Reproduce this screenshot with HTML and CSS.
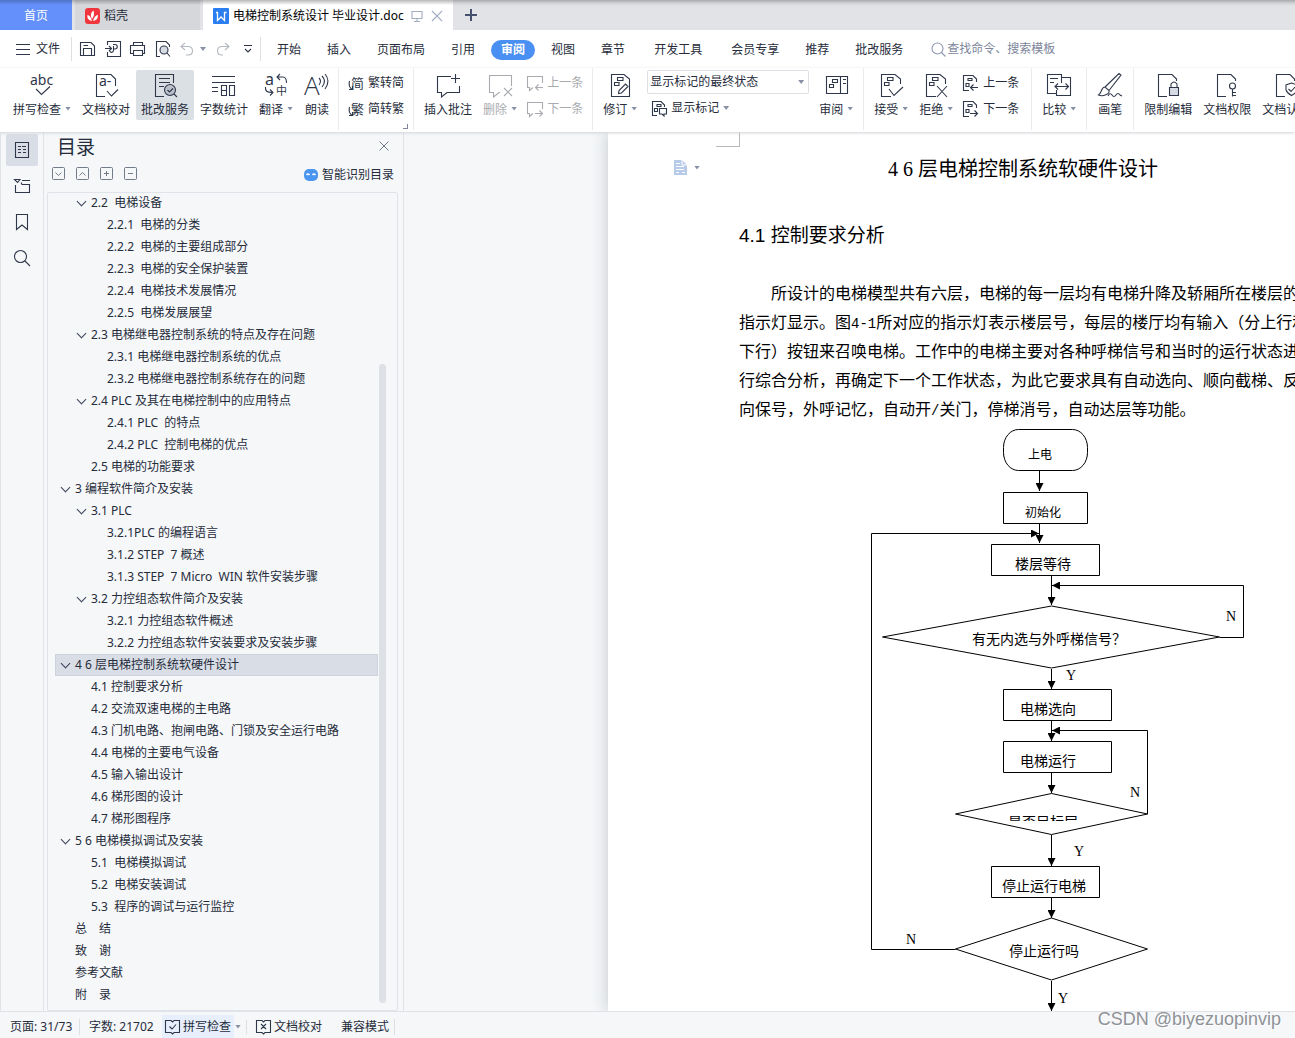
FILE: index.html
```html
<!DOCTYPE html>
<html lang="zh-CN">
<head>
<meta charset="utf-8">
<title>电梯控制系统设计 毕业设计.doc</title>
<link rel="stylesheet" href="styles.css">
</head>
<body>
<svg class="defs" aria-hidden="true">
  <symbol id="page-marks" viewBox="0 0 26 26"><path d="M13 24.500H3.500V2.500H17L22.500 7V12"/><path d="M9.500 5.500H15V8.500H9.500ZM6.500 10.500H11V13.500H6.500Z" /></symbol>
  <symbol id="page-blank" viewBox="0 0 26 26"><path d="M12 24.500H3.500V2.500H17L21.500 7V9"/></symbol>
  <symbol id="bubble" viewBox="0 0 26 26"><path d="M16 4.500H2.500V20.500H6.500V25L12 20.500H24.500V14"/></symbol>
</svg>

<header class="tabs">
  <button class="tab home">首页</button>
  <button class="tab docer"><svg width="15" height="16" viewBox="0 0 15 16"><rect width="15" height="16" rx="3" fill="#f0353d"/><path d="M7 13C2.500 12 2 9 2.500 7 4.500 7.500 6 9 7 13ZM7 11C5 7 6 4.500 8.500 2.500 9.500 6 9 8.500 7 11ZM8 13C9 9 10.500 7.500 13 7 13 10.500 11.500 12.500 8 13Z" fill="#fff"/></svg>稻壳</button>
  <button class="tab current"><svg width="16" height="16" viewBox="0 0 16 16"><rect width="16" height="16" rx="1" fill="#2b7ef0"/><path d="M3 4.500H4.500V12.500L8 9 11.500 12.500V4.500H13.500" fill="none" stroke="#fff" stroke-width="1.300"/></svg><span>电梯控制系统设计 毕业设计.doc</span>
    <svg class="ico pale screen" width="12" height="12" viewBox="0 0 12 12"><path d="M1 1.500H11V8.500H1ZM6 8.500V11M3 11.500H9"/></svg>
    <svg class="ico pale close" width="12" height="12" viewBox="0 0 12 12"><path d="M1 1L11 11M11 1L1 11"/></svg></button>
  <button class="add" aria-label="新建"><svg width="12" height="12" viewBox="0 0 12 12"><path d="M6 0V12M0 6H12" stroke="#47506b" stroke-width="2"/></svg></button>
</header>

<nav class="menu">
  <button class="file"><svg class="ico" width="14" height="11" viewBox="0 0 14 11"><path d="M0 .5H14M0 5.500H14M0 10.500H14"/></svg>文件</button>
  <div class="quick">
    <button aria-label="保存"><svg class="ico" width="16" height="16" viewBox="0 0 16 16"><path d="M.5 1.500H11L14.500 5V14.500H.5ZM3.500 14.500V7.500H11.500V14.500M3.500 4.500H8"/></svg></button>
    <button aria-label="输出为PDF"><svg class="ico" width="16" height="16" viewBox="0 0 16 16"><path d="M2.500 4V.5H15.500V15.500H2.500V11M0 7.500H6M4 5L6.500 7.500 4 10M8 3.500H10C13 3.500 13 8 10 8H8M8.500 5V9C8.500 12 5 12 5 10"/></svg></button>
    <button aria-label="打印"><svg class="ico" width="16" height="16" viewBox="0 0 16 16"><path d="M3.500 4.500V1.500H12.500V4.500M3.500 12.500H.5V4.500H14.500V12.500H12.500M3.500 9.500H12.500V14.500H3.500Z"/></svg></button>
    <button aria-label="打印预览"><svg class="ico" width="16" height="16" viewBox="0 0 16 16"><path d="M5 15.500H1.500V.5H11L14.500 4V6M12 12L15 15.500"/><circle cx="9" cy="9" r="4" fill="#d5dae3"/></svg></button>
    <button class="undo" aria-label="撤销"><svg class="ico gray" width="14" height="14" viewBox="0 0 14 14"><path d="M5 1L1 4.500 5 8M1 4.500H8C11 4.500 12.500 6 12.500 9 12.500 11 11 13 8 13H6"/></svg><i class="caret"></i></button>
    <button aria-label="恢复"><svg class="ico gray" width="14" height="14" viewBox="0 0 14 14"><path d="M9 1L13 4.500 9 8M13 4.500H6C3 4.500 1.500 6 1.500 9 1.500 11 3 13 6 13H7"/></svg></button>
    <button aria-label="更多"><svg class="ico" width="8" height="8" viewBox="0 0 8 8"><path d="M0 .5H8M1 4L4 7 7 4"/></svg></button>
  </div>
  <div class="pages">
    <button>开始</button><button>插入</button><button>页面布局</button><button>引用</button><button class="active">审阅</button><button>视图</button><button>章节</button><button class="wide">开发工具</button><button>会员专享</button><button>推荐</button><button>批改服务</button>
  </div>
  <label class="search"><svg class="ico" width="15" height="15" viewBox="0 0 15 15"><circle cx="6.500" cy="6.500" r="5.500"/><path d="M10.500 10.500L14.500 14.500"/></svg><input type="text" placeholder="查找命令、搜索模板" aria-label="查找命令"></label>
</nav>

<div class="ribbon">
  <div class="group first">
    <button class="big"><svg class="ico" viewBox="0 0 26 26"><text x="1" y="13" font-size="14">abc</text><path d="M7 17L12.500 22.500 21 14.500"/></svg><span>拼写检查<i class="caret"></i></span></button>
    <button class="big"><svg class="ico" viewBox="0 0 26 26"><path d="M12 24.500H3.500V2.500H18L22.500 7V14M14 19L18.500 24 25 17.500"/><text x="6" y="14" font-size="14">a-</text></svg><span>文档校对</span></button>
    <button class="big on"><svg class="ico" viewBox="0 0 26 26"><path d="M12 24.500H3.500V2.500H21.500V11M7 6.500H18M7 10.500H18M7 14.500H12"/><circle cx="18" cy="18" r="5.500" fill="#b9c0ca"/><path d="M15.500 18L17.500 20 21 16.500M22 22L25 25"/></svg><span>批改服务</span></button>
    <button class="big"><svg class="ico" viewBox="0 0 26 26"><path d="M1 4.500H24M1 10.500H24M1 15.500H7M1 19.500H7M10.500 13.500H15.500V23.500H10.500ZM10.500 18.500H15.500M18.500 13.500H23.500V23.500H18.500Z"/></svg><span>字数统计</span></button>
    <button class="big"><svg class="ico" viewBox="0 0 26 26"><text x="2" y="13" font-size="16">a</text><text x="13" y="23" font-size="11">中</text><path d="M17 2L14 5 17 8M14 5H20C23 5 23.500 7 23.500 11M2.500 15C2 19 4 20.500 9 20.500M7 17.500L10 20.500 7 23.500"/></svg><span>翻译<i class="caret"></i></span></button>
    <button class="big"><svg class="ico" viewBox="0 0 26 26"><text class="thin" x="0" y="23" font-size="26">A</text><path d="M15 6Q18 9 15 13M18 4Q23 9 18 15M21 2Q27 9 21 17"/></svg><span>朗读</span></button>
  </div>
  <div class="group">
    <div class="stack">
      <button class="small"><svg class="ico" width="16" height="17" viewBox="0 0 16 17"><text x="3" y="13" font-size="13">简</text><path d="M1.500 6Q0 11 4 14.500M1 14.500H4.500V11"/></svg>繁转简</button>
      <button class="small"><svg class="ico" width="16" height="17" viewBox="0 0 16 17"><text x="3" y="13" font-size="13">繁</text><path d="M1.500 6Q0 11 4 14.500M1 14.500H4.500V11"/></svg>简转繁</button>
    </div>
    <i class="corner"></i>
  </div>
  <div class="group">
    <button class="big"><svg class="ico" viewBox="0 0 26 26"><use href="#bubble"/><path d="M20.500 2V11M16 6.500H25"/></svg><span>插入批注</span></button>
    <button class="big off"><svg class="ico" viewBox="0 0 26 26"><path d="M13 20.500H12L6.500 25V20.500H2.500V3.500H24.500V14M17 16L25 24M25 16L17 24"/></svg><span>删除<i class="caret"></i></span></button>
    <div class="stack">
      <button class="small off"><svg class="ico" width="16" height="17" viewBox="0 0 16 17"><path d="M15.500 8V1.500H.5V12.500H2.500V15.500L6 12.500M16 12.500H9M11.500 9.500L8.500 12.500 11.500 15.500"/></svg>上一条</button>
      <button class="small off"><svg class="ico" width="16" height="17" viewBox="0 0 16 17"><path d="M15.500 8V1.500H.5V12.500H2.500V15.500L6 12.500M8 12.500H15M12.500 9.500L15.500 12.500 12.500 15.500"/></svg>下一条</button>
    </div>
  </div>
  <div class="group">
    <button class="big"><svg class="ico" viewBox="0 0 26 26"><path d="M4.500 2.500H17L22.500 7V24.500H4.500ZM10.500 5.500H16V8.500H10.500ZM7.500 10.500H12V13.500H7.500ZM11.500 21.500L12 18.500 18.500 12 21 14.500 14.500 21Z"/></svg><span>修订<i class="caret"></i></span></button>
    <div class="stack view">
      <div class="combo"><select aria-label="显示状态"><option>显示标记的最终状态</option></select><i class="caret"></i></div>
      <button class="small"><svg class="ico" width="16" height="17" viewBox="0 0 16 17"><path d="M6 15.500H1.500V1.500H10L13.500 5V7M6 4.500H10V6.500H6ZM3.500 8.500H6.500V11.500H3.500ZM8.500 8.500H15.500V14H13V16L11 14H8.500Z"/></svg>显示标记<i class="caret"></i></button>
    </div>
    <button class="big"><svg class="ico" viewBox="0 0 26 26"><path d="M3.500 4.500H24.500V21.500H3.500ZM17.500 4.500V21.500M9.500 7.500H14.500V10.500H9.500ZM6.500 12.500H10.500V15.500H6.500ZM20 7.500H23M20 11.500H23"/></svg><span>审阅<i class="caret"></i></span></button>
  </div>
  <div class="group review">
    <button class="big"><svg class="ico" viewBox="0 0 26 26"><use href="#page-marks"/><path d="M11 17L16 23.500 25 15"/></svg><span>接受<i class="caret"></i></span></button>
    <button class="big"><svg class="ico" viewBox="0 0 26 26"><use href="#page-marks"/><path d="M14 14L24 25M24 14L14 25"/></svg><span>拒绝<i class="caret"></i></span></button>
    <div class="stack">
      <button class="small"><svg class="ico" width="16" height="17" viewBox="0 0 16 17"><path d="M6 15.500H.5V.5H10L13.500 4V7M5 3.500H9V5.500H5ZM3 8.500H6V11.500H3ZM15 12.500H8M10.500 9.500L7.500 12.500 10.500 15.500"/></svg>上一条</button>
      <button class="small"><svg class="ico" width="16" height="17" viewBox="0 0 16 17"><path d="M6 15.500H.5V.5H10L13.500 4V7M5 3.500H9V5.500H5ZM3 8.500H6V11.500H3ZM7 12.500H14M11.500 9.500L14.500 12.500 11.500 15.500"/></svg>下一条</button>
    </div>
  </div>
  <div class="group">
    <button class="big"><svg class="ico" viewBox="0 0 26 26"><path d="M11 21.500H1.500V2.500H15.500V11M4 6.500H12M4 10.500H8M15.500 5.500H24.500V23.500H10.500V18M9.500 14.500H22M12 11.500L9 14.500 12 17.500M19.500 11.500L22.500 14.500 19.500 17.500"/></svg><span>比较<i class="caret"></i></span></button>
  </div>
  <div class="group">
    <button class="big"><svg class="ico" viewBox="0 0 26 26"><path d="M8 15L22 1.500 24 3 12 18.500M8 15C4 15 5 21 1.500 23 6 25 13 22 12 18.500ZM11 24Q13 20 15 23T19 23T23 23L25 24"/></svg><span>画笔</span></button>
  </div>
  <div class="group last">
    <button class="big"><svg class="ico" viewBox="0 0 26 26"><use href="#page-blank"/><path d="M14.500 15.500H23.500V23.500H14.500Z" fill="#d5dae3"/><path d="M16 15.500V12Q19 8 22 12V15.500"/></svg><span>限制编辑</span></button>
    <button class="big"><svg class="ico" viewBox="0 0 26 26"><use href="#page-blank"/><circle cx="18.500" cy="14" r="3"/><path d="M18.500 17V24.500M18.500 20.500H22M18.500 23.500H22"/></svg><span>文档权限</span></button>
    <button class="big"><svg class="ico" viewBox="0 0 26 26"><use href="#page-blank"/><path d="M18.500 11L24 13V18Q23 21 18.500 23.500 14 21 13 18V13ZM15.500 17L18 19.500 22 15"/></svg><span>文档认证</span></button>
  </div>
</div>

<main class="body">
  <aside class="rail">
    <button class="on" aria-label="目录"><svg class="ico" width="16" height="16" viewBox="0 0 16 16"><path d="M1.500 .5H14.500V15.500H1.500ZM4 4.500H7M4 7.500H7M4 10.500H7M8 4.500H12M9 7.500H12M9 10.500H12"/></svg></button>
    <button aria-label="章节"><svg class="ico" width="16" height="16" viewBox="0 0 16 16"><path d="M.5 1.500H6L3.500 4.500ZM8 2.500H16M1.500 7V14.500H15.500V6.500H8L7 4.500"/></svg></button>
    <button aria-label="书签"><svg class="ico" width="16" height="16" viewBox="0 0 16 16"><path d="M2.500 .5H13.500V15.500L8 11 2.500 15.500Z"/></svg></button>
    <button aria-label="查找"><svg class="ico" width="16" height="16" viewBox="0 0 16 16"><circle cx="6.500" cy="6.500" r="6"/><path d="M11 11L16 16"/></svg></button>
  </aside>

  <section class="outline">
    <div class="head"><h2>目录</h2><button aria-label="关闭"><svg class="ico" width="10" height="10" viewBox="0 0 10 10"><path d="M.5 .5L9.500 9.500M9.500 .5L.5 9.500"/></svg></button></div>
    <div class="tools">
      <button aria-label="展开"><svg class="ico" width="13" height="13" viewBox="0 0 13 13"><rect x=".5" y=".5" width="12" height="12" rx="1"/><path d="M3.500 5.500L6.500 8.500 9.500 5.500"/></svg></button>
      <button aria-label="收起"><svg class="ico" width="13" height="13" viewBox="0 0 13 13"><rect x=".5" y=".5" width="12" height="12" rx="1"/><path d="M3.500 8.500L6.500 5.500 9.500 8.500"/></svg></button>
      <button aria-label="增加"><svg class="ico" width="13" height="13" viewBox="0 0 13 13"><rect x=".5" y=".5" width="12" height="12" rx="1"/><path d="M4 6.500H9M6.500 4V9"/></svg></button>
      <button aria-label="减少"><svg class="ico" width="13" height="13" viewBox="0 0 13 13"><rect x=".5" y=".5" width="12" height="12" rx="1"/><path d="M4 6.500H9"/></svg></button>
      <a class="smart" href="#"><svg width="14" height="12" viewBox="0 0 14 12"><rect width="14" height="12" rx="5" fill="#4b96f0"/><path d="M2.500 6Q4 4 5.500 6M8.500 6Q10 4 11.500 6" fill="none" stroke="#fff" stroke-width="1.300"/></svg>智能识别目录</a>
    </div>
    <div class="tree">
      <ul>
        <li class="l2 open"><a href="#">2.2  电梯设备</a></li>
        <li class="l3"><a href="#">2.2.1  电梯的分类</a></li>
        <li class="l3"><a href="#">2.2.2  电梯的主要组成部分</a></li>
        <li class="l3"><a href="#">2.2.3  电梯的安全保护装置</a></li>
        <li class="l3"><a href="#">2.2.4  电梯技术发展情况</a></li>
        <li class="l3"><a href="#">2.2.5  电梯发展展望</a></li>
        <li class="l2 open"><a href="#">2.3 电梯继电器控制系统的特点及存在问题</a></li>
        <li class="l3"><a href="#">2.3.1 电梯继电器控制系统的优点</a></li>
        <li class="l3"><a href="#">2.3.2 电梯继电器控制系统存在的问题</a></li>
        <li class="l2 open"><a href="#">2.4 PLC 及其在电梯控制中的应用特点</a></li>
        <li class="l3"><a href="#">2.4.1 PLC  的特点</a></li>
        <li class="l3"><a href="#">2.4.2 PLC  控制电梯的优点</a></li>
        <li class="l2"><a href="#">2.5 电梯的功能要求</a></li>
        <li class="l1 open"><a href="#">3 编程软件简介及安装</a></li>
        <li class="l2 open"><a href="#">3.1 PLC</a></li>
        <li class="l3"><a href="#">3.2.1PLC 的编程语言</a></li>
        <li class="l3"><a href="#">3.1.2 STEP  7 概述</a></li>
        <li class="l3"><a href="#">3.1.3 STEP  7 Micro  WIN 软件安装步骤</a></li>
        <li class="l2 open"><a href="#">3.2 力控组态软件简介及安装</a></li>
        <li class="l3"><a href="#">3.2.1 力控组态软件概述</a></li>
        <li class="l3"><a href="#">3.2.2 力控组态软件安装要求及安装步骤</a></li>
        <li class="l1 open selected"><a href="#">4 6 层电梯控制系统软硬件设计</a></li>
        <li class="l2"><a href="#">4.1 控制要求分析</a></li>
        <li class="l2"><a href="#">4.2 交流双速电梯的主电路</a></li>
        <li class="l2"><a href="#">4.3 门机电路、抱闸电路、门锁及安全运行电路</a></li>
        <li class="l2"><a href="#">4.4 电梯的主要电气设备</a></li>
        <li class="l2"><a href="#">4.5 输入输出设计</a></li>
        <li class="l2"><a href="#">4.6 梯形图的设计</a></li>
        <li class="l2"><a href="#">4.7 梯形图程序</a></li>
        <li class="l1 open"><a href="#">5 6 电梯模拟调试及安装</a></li>
        <li class="l2"><a href="#">5.1  电梯模拟调试</a></li>
        <li class="l2"><a href="#">5.2  电梯安装调试</a></li>
        <li class="l2"><a href="#">5.3  程序的调试与运行监控</a></li>
        <li class="l1"><a href="#">总　结</a></li>
        <li class="l1"><a href="#">致　谢</a></li>
        <li class="l1"><a href="#">参考文献</a></li>
        <li class="l1"><a href="#">附　录</a></li>
      </ul>
      <i class="thumb"></i>
    </div>
  </section>

  <section class="workspace">
    <article class="sheet">
      <i class="crop"></i>
      <span class="mark"><svg width="13" height="15" viewBox="0 0 13 15"><path d="M0 0H8L13 5V15H0Z" fill="#b7cbe8"/><path d="M8 0V5H13M2 3.500H6M2 6.500H10M2 9.500H10M2 12.500H5M8 12.500H11" stroke="#fff" fill="none"/></svg><i class="caret"></i></span>
      <h1>4 6 层电梯控制系统软硬件设计</h1>
      <h3>4.1 控制要求分析</h3>
      <p>所设计的电梯模型共有六层，电梯的每一层均有电梯升降及轿厢所在楼层的<br>指示灯显示。图<span class="half">4-1</span>所对应的指示灯表示楼层号，每层的楼厅均有输入（分上行和<br>下行）按钮来召唤电梯。工作中的电梯主要对各种呼梯信号和当时的运行状态进<br>行综合分析，再确定下一个工作状态，为此它要求具有自动选向、顺向截梯、反<br>向保号，外呼记忆，自动开<span class="half">/</span>关门，停梯消号，自动达层等功能。</p>
      <svg class="flow" width="390" height="584" viewBox="860 428 390 584">
        <defs>
          <marker id="tip" viewBox="0 0 8 8" refX="8" refY="4" markerWidth="8" markerHeight="8" markerUnits="userSpaceOnUse" orient="auto"><path d="M0 0L8 4 0 8Z" fill="#000"/></marker>
          <clipPath id="cut"><rect x="1000" y="806" width="100" height="15"/></clipPath>
        </defs>
        <g class="shape">
          <rect x="1003.500" y="429.500" width="84" height="41" rx="15" ry="18"/>
          <path d="M1003.500 492.500H1087.500V523.500H1003.500ZM991.500 544.500H1099.500V575.500H991.500ZM1003.500 689.500H1111.500V720.500H1003.500ZM1003.500 741.500H1111.500V772.500H1003.500ZM991.500 866.500H1099.500V897.500H991.500Z"/>
          <path d="M882.500 637L1051.500 606 1219.500 637 1051.500 668ZM955.500 814L1051.500 793.500 1147.500 814 1051.500 834.500ZM955.500 949L1051.500 918 1147.500 949 1051.500 980Z"/>
        </g>
        <g class="shape arrows">
          <path d="M1039.500 471V491"/><path d="M1039.500 524V543"/><path d="M1051.500 576V605"/><path d="M1051.500 669V689"/><path d="M1051.500 721V741"/><path d="M1051.500 773V793"/><path d="M1051.500 835V866"/><path d="M1051.500 898V918"/><path d="M1051.500 981V1011"/>
          <path d="M955.500 949.500H871.500V533.500H1039"/><path d="M1219.500 637.500H1243.500V585.500H1052"/><path d="M1147.500 814V730.500H1052"/>
        </g>
        <g class="words">
          <text x="1028" y="459" class="s">上电</text><text x="1025" y="517" class="s">初始化</text>
          <text x="1015" y="569">楼层等待</text><text x="972" y="644">有无内选与外呼梯信号？</text>
          <text x="1020" y="714">电梯选向</text><text x="1020" y="766">电梯运行</text>
          <text x="1008" y="827" clip-path="url(#cut)">是否目标层</text>
          <text x="1002" y="891">停止运行电梯</text><text x="1009" y="956">停止运行吗</text>
          <text x="1226" y="621">N</text><text x="1066" y="680">Y</text><text x="1130" y="797">N</text><text x="1074" y="856">Y</text><text x="906" y="944">N</text><text x="1058" y="1003">Y</text>
        </g>
      </svg>
    </article>
  </section>
</main>

<footer class="status">
  <span class="cell">页面: 31/73</span>
  <span class="cell plain">字数: 21702</span>
  <button class="spell"><svg class="ico" width="15" height="14" viewBox="0 0 15 14"><path d="M6 12.500H.5V.5H6L7.500 2 9 .5H14.500V12.500H9L7.500 14ZM4.500 6.500L7 9 11 4.500"/></svg>拼写检查</button>
  <button class="drop" aria-label="拼写选项"><i class="caret"></i></button>
  <button class="proof"><svg class="ico" width="15" height="14" viewBox="0 0 15 14"><path d="M6 12.500H.5V.5H6L7.500 2 9 .5H14.500V12.500H9L7.500 14ZM5 4L10 9M10 4L5 9"/></svg>文档校对</button>
  <span class="mode">兼容模式</span>
  <span class="credit">CSDN @biyezuopinvip</span>
</footer>
</body>
</html>
```
FILE: styles.css
```css
*, *::before { box-sizing: border-box; }

body {
  margin: 0;
  height: 100vh;
  display: flex;
  flex-direction: column;
  overflow: hidden;
  background: #fff;
  color: #262c3b;
  font: 12px/16px "Noto Sans", "Noto Sans CJK SC", sans-serif;
}

button, input, select { font: inherit; color: inherit; }
button { margin: 0; padding: 0; border: 0; background: none; white-space: nowrap; }
a { color: inherit; text-decoration: none; }
.defs { position: absolute; width: 0; height: 0; }

.ico { flex: none; fill: none; stroke: #2f374a; stroke-width: 1.1; overflow: visible; }
.ico text { fill: #2f374a; stroke: none; }
.ico .thin { font-family: "Open Sans", sans-serif; font-weight: 300; }
.ico.gray { stroke: #b4b8bf; }
.ico.pale { stroke: #a3adc2; }

.caret {
  flex: none;
  width: 6px;
  height: 4px;
  background: #8790a5;
  clip-path: polygon(0 0, 100% 0, 50% 100%);
}

/* document tabs */
.tabs {
  flex: none;
  display: flex;
  height: 30px;
  background: linear-gradient(#a8a9ab, #cfd0d3 3px, #e1e3e7 6px);
}
.tab { display: flex; align-items: center; padding-top: 2px; }
.home { width: 72px; justify-content: center; margin-right: 3px; color: #fff; background: linear-gradient(#4f73c4, #6390fa 5px); }
.docer { width: 125px; padding-left: 10px; gap: 4px; margin-right: 3px; background: linear-gradient(#a0a1a4, #d6d7da 5px); }
.current { width: 250px; padding-left: 10px; gap: 4px; color: #000; background: linear-gradient(#b8b8b8, #fff 5px); }
.current .screen { margin: 0 4px 0 3px; }
.add { width: 36px; display: grid; place-items: center; }

/* menu row */
.menu { flex: none; display: flex; align-items: center; height: 38px; }
.menu button { display: flex; align-items: center; }
.file { gap: 6px; padding: 0 11px 0 16px; }
.quick { display: flex; align-items: center; gap: 9px; height: 24px; padding: 0 4px 0 8px; border: solid #dddfe3; border-width: 0 1px; }
.quick button { justify-content: center; min-width: 16px; }
.quick .undo { gap: 6px; }
.pages { display: flex; gap: 6px; padding: 2px 0 0 6px; }
.pages button { height: 20px; padding: 0 10px; border-radius: 10px; }
.pages .active { background: #4a90f2; color: #fff; font-weight: bold; }
.pages .wide { margin: 0 3px; }
.search { flex: 1; display: flex; align-items: center; gap: 1px; padding-left: 18px; }
.search .ico { stroke: #8e98ae; }
.search input { flex: 1; min-width: 0; padding: 0; border: 0; outline: 0; background: none; }
.search input::placeholder { color: #7c859b; opacity: 1; }

/* ribbon */
.ribbon { position: relative; z-index: 2; flex: none; display: flex; height: 64px; padding-bottom: 2px; background: #fff; box-shadow: 0 1px 3px #cfd2d7; }
.group { position: relative; flex: none; display: flex; align-items: flex-start; gap: 1px; padding: 2px 5px 0; border-right: 1px solid #e9ebee; }
.group.first { padding: 2px 3px 0 8px; }
.group.last { border: 0; }
.group.review { padding-right: 8px; }
.big { height: 50px; padding: 2px 5px 0; display: flex; flex-direction: column; align-items: center; gap: 4px; }
.big.on { background: #dbe0e5; border-radius: 2px; }
.big .ico { width: 26px; height: 26px; }
.big span { display: flex; align-items: center; }
.big .caret { margin: 0 0 3px 4px; }
.off { color: #a9abb0; }
.off .ico { stroke: #a9abb0; }
.stack { display: flex; flex-direction: column; gap: 2px; padding: 1px 4px 0; }
.stack.view { padding-top: 0; }
.small { display: flex; align-items: center; gap: 4px; height: 24px; }
.small .caret { margin-left: 0; }
.corner { position: absolute; right: 5px; bottom: 1px; width: 5px; height: 5px; border: solid #7e8798; border-width: 0 1px 1px 0; }
.view .small { padding-left: 4px; }
.combo { display: flex; align-items: center; width: 162px; height: 24px; padding-right: 4px; border: 1px solid #dcdfe3; border-radius: 2px; }
.combo select { flex: 1; height: 22px; padding: 0 2px; border: 0; outline: 0; appearance: none; background: none; }

/* main area */
.body { flex: 1; min-height: 0; display: flex; background: #f5f7f9; }
.rail { flex: none; width: 44px; padding: 2px 5px; display: flex; flex-direction: column; gap: 4px; border: solid #e0e3e8; border-width: 0 1px; }
.rail button { display: grid; place-items: center; height: 32px; border-radius: 2px; }
.rail .on { background: #d9dee6; }

.outline { flex: none; width: 360px; display: flex; flex-direction: column; padding: 0 5px 0 3px; border-right: 1px solid #e0e3e8; }
.head { display: flex; justify-content: space-between; align-items: center; height: 30px; padding: 0 9px 0 10px; }
.head h2 { margin: 0; font-size: 19px; line-height: 28px; font-weight: normal; }
.head .ico { stroke: #717988; stroke-width: 1; }
.tools { display: flex; align-items: center; gap: 11px; height: 30px; padding: 0 4px 7px 5px; }
.tools button { display: flex; }
.tools .ico { stroke: #737b8a; stroke-width: 1; }
.smart { display: flex; align-items: center; gap: 4px; margin-left: auto; padding-top: 2px; }
.tree { position: relative; flex: 1; min-height: 0; overflow: hidden; border-radius: 2px; box-shadow: inset 0 0 0 1px #e0e3ea; }
.tree ul { margin: 0; padding: 0 20px 0 8px; list-style: none; }
.tree li { display: flex; align-items: center; height: 22px; white-space: pre; }
.tree li::before { content: ""; flex: none; width: 7px; height: 7px; margin: 0 6px 3px 2px; }
.tree .open::before { border: solid #3b4358; border-width: 0 1px 1px 0; transform: rotate(45deg); }
.l1 { padding-left: 5px; }
.l2 { padding-left: 21px; }
.l3 { padding-left: 37px; }
.tree .selected { background: #d9dee6; box-shadow: inset 0 0 0 1px #ccd3dc; }
.thumb { position: absolute; right: 12px; top: 172px; bottom: 8px; width: 7px; border-radius: 4px; background: #dde1e5; }

.workspace { flex: 1; min-width: 0; overflow: hidden; display: flex; padding-left: 204px; }
.sheet { position: relative; flex: none; width: 830px; padding: 23px 131px 0; background: #fff; color: #000; box-shadow: 0 0 16px #c3c6ca; font-family: "Liberation Serif", "Noto Sans CJK SC", serif; }
.crop { position: absolute; left: 108px; top: 0; width: 24px; height: 15px; border: solid #b9b9b9; border-width: 0 1px 1px 0; }
.mark { position: absolute; left: 66px; top: 28px; display: flex; align-items: center; gap: 7px; }
.sheet h1 { margin: 0 0 38px; font-size: 20px; line-height: 28px; font-weight: normal; text-align: center; }
.sheet h3 { margin: 0 0 28px; font: 19px/30px "Liberation Sans", "Noto Sans CJK SC", sans-serif; }
.sheet p { margin: 0; font-size: 16px; line-height: 29px; text-indent: 32px; white-space: nowrap; }
.half { font: 14px "Liberation Mono", monospace; }
.flow { display: block; margin: 4px 0 0 121px; }
.shape { fill: none; stroke: #000; stroke-width: 1; }
.arrows path { marker-end: url(#tip); }
.words { font-size: 14px; }
.words .s { font-size: 12px; }

/* status bar */
.status { position: relative; z-index: 2; flex: none; display: flex; align-items: center; height: 27px; padding: 3px 0 0 10px; border-top: 1px solid #dfe2e7; background: #f5f7f9; }
.status button { display: flex; align-items: center; gap: 3px; }
.cell { width: 70px; margin-right: 9px; border-right: 1px solid #dcdfe4; white-space: nowrap; }
.cell.plain { width: 73px; margin: 0; border: 0; }
.spell { height: 23px; padding: 0 3px; background: #e6effb; }
.drop { height: 14px; padding: 0 5px 0 1px; border-right: 1px solid #dcdfe4; }
.proof { padding: 0 19px 0 9px; }
.mode { padding-right: 5px; border-right: 1px solid #dcdfe4; }
.credit { position: absolute; right: 14px; top: -4px; color: #8f9297; font: 18px/22px "Liberation Sans", sans-serif; text-shadow: 1px 1px 1px #fff; }
```
